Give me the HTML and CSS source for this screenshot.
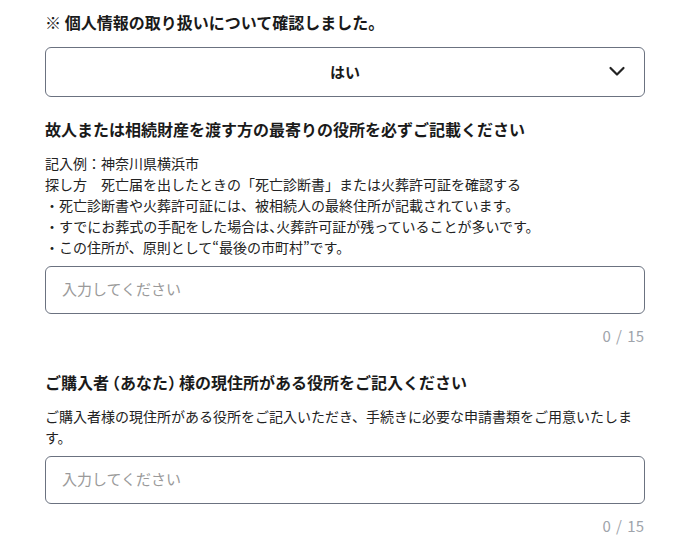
FILE: index.html
```html
<!DOCTYPE html>
<html lang="ja">
<head>
    <meta charset="UTF-8">
    <meta name="viewport" content="width=device-width, initial-scale=1.0">
    <title>役所の確認</title>
    <link rel="stylesheet" href="styles.css">
</head>
<body>
    <div class="form">
        <p class="notice">※ 個人情報の取り扱いについて確認しました。</p>
        <div class="select">
            <span class="select-value">はい</span>
            <svg class="chevron" width="18" height="18" viewBox="0 0 18 18">
                <path d="M2.5 6 L9 12.5 L15.5 6" fill="none" stroke="#222" stroke-width="2.2" stroke-linecap="round" stroke-linejoin="round"/>
            </svg>
        </div>

        <h2 class="field-title">故人または相続財産を渡す方の最寄りの役所を必ずご記載ください</h2>
        <div class="field-desc">
            記入例：神奈川県横浜市<br>
            探し方　死亡届を出したときの「死亡診断書」または火葬許可証を確認する<br>
            ・死亡診断書や火葬許可証には、被相続人の最終住所が記載されています。<br>
            ・すでにお葬式の手配をした場合は<span class="half">、</span>火葬許可証が残っていることが多いです。<br>
            ・この住所が、原則として“最後の市町村”です。
        </div>
        <input class="text-input" type="text" placeholder="入力してください">
        <div class="counter">0 / 15</div>

        <h2 class="field-title second">ご購入者<span class="half open">（</span>あなた<span class="half close">）</span>様の現住所がある役所をご記入ください</h2>
        <div class="field-desc">
            ご購入者様の現住所がある役所をご記入いただき、手続きに必要な申請書類をご用意いたします。
        </div>
        <input class="text-input" type="text" placeholder="入力してください">
        <div class="counter">0 / 15</div>
    </div>
</body>
</html>
```

FILE: styles.css
```css
body {
    margin: 0;
    background-color: #fff;
    color: #1a1a1a;
    font-family: "Noto Sans CJK JP", "Noto Sans", sans-serif;
}

.form {
    width: 600px;
    padding: 10px 0 0 45px;
}

.notice {
    margin: 0;
    font-size: 16px;
    font-weight: bold;
    line-height: 24px;
}

.select {
    margin-top: 13px;
    height: 48px;
    border: 1px solid #6b7280;
    border-radius: 6px;
    display: flex;
    align-items: center;
    justify-content: center;
    position: relative;
}

.select-value {
    font-size: 15px;
    font-weight: bold;
    margin-top: -2px;
}

.chevron {
    position: absolute;
    right: 18px;
    top: 14px;
}

.field-title {
    margin: 20px 0 0;
    font-size: 16px;
    font-weight: bold;
    line-height: 24px;
}

.field-title.second {
    margin-top: 24px;
}

.half {
    font-feature-settings: "halt";
}

.half.open {
    margin-left: 3px;
}

.half.close {
    margin-right: 3px;
}

.field-desc {
    margin-top: 12px;
    font-size: 14px;
    line-height: 21px;
    color: #222;
}

.text-input {
    display: block;
    box-sizing: border-box;
    width: 100%;
    height: 48px;
    margin-top: 8px;
    padding: 0 16px 3px;
    border: 1px solid #6b7280;
    border-radius: 6px;
    font-family: inherit;
    font-size: 15px;
    color: #1a1a1a;
}

.text-input::placeholder {
    color: #9a9a9a;
}

.counter {
    margin-top: 12px;
    padding-right: 1px;
    text-align: right;
    font-size: 15px;
    line-height: 20px;
    word-spacing: 2px;
    color: #a0a4ab;
}
```
